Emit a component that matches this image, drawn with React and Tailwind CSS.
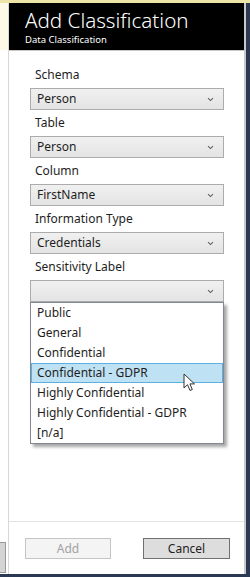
import React from "react";

const font = { fontFamily: '"Noto Sans", "Open Sans", sans-serif' };

function Chevron() {
  return (
    <svg width="7" height="5" viewBox="0 0 7 5" className="shrink-0">
      <path d="M1 1.2 L3.5 3.6 L6 1.2" fill="none" stroke="#606060" strokeWidth="1.1" />
    </svg>
  );
}

function Label({ children }) {
  return (
    <div className="h-[26px] flex items-center pl-[5px] text-[12px] text-[#1e1e1e]">{children}</div>
  );
}

function Combo({ value }) {
  return (
    <div className="h-[22px] w-[194px] border border-[#acacac] bg-gradient-to-b from-[#f0f0f0] to-[#e4e4e4] flex items-center justify-between pl-[6px] pr-[9px] text-[12px] text-[#1e1e1e]">
      <span>{value}</span>
      <Chevron />
    </div>
  );
}

const items = [
  "Public",
  "General",
  "Confidential",
  "Confidential - GDPR",
  "Highly Confidential",
  "Highly Confidential - GDPR",
  "[n/a]",
];

export default function App() {
  return (
    <div className="w-[250px] h-[577px] flex flex-col bg-white overflow-hidden" style={font}>
      <div className="h-[3px] bg-[#ede5a8]" />
      <div className="flex flex-1">
        <div className="w-[8px] flex flex-col">
          <div className="h-[47px] bg-[#fcf9e6]" />
          <div className="flex-1 bg-white" />
          <div className="h-[31px] w-[6px] bg-[#d4d4d4] border border-[#9a9a9a] border-l-0 mb-[1px]" />
        </div>
        <div className="w-[236px] flex flex-col border-l border-[#d8d8d8] relative">
          <div className="h-[47px] bg-black pl-[16px] pt-[5px] text-white">
            <div className="text-[20.6px] leading-[24px] font-light">Add Classification</div>
            <div className="text-[9.5px] leading-[13px] mt-[1px]">Data Classification</div>
          </div>
          <div className="h-[1px] bg-[#c8c8c8]" />
          <div className="flex-1 flex flex-col pt-[11px] pl-[21px]">
            <Label>Schema</Label>
            <Combo value="Person" />
            <Label>Table</Label>
            <Combo value="Person" />
            <Label>Column</Label>
            <Combo value="FirstName" />
            <Label>Information Type</Label>
            <Combo value="Credentials" />
            <Label>Sensitivity Label</Label>
            <Combo value="" />
            <div className="relative">
              <div className="absolute left-0 top-0 w-[194px] border border-[#828790] bg-white shadow-[3px_3px_3px_rgba(0,0,0,0.35)] z-10">
                {items.map((it) => (
                  <div
                    key={it}
                    className={
                      it === "Confidential - GDPR"
                        ? "h-[20px] flex items-center pl-[5px] text-[12px] text-[#1e1e1e] bg-[#bfe1f4] border border-[#5bb0df]"
                        : "h-[20px] flex items-center pl-[6px] text-[12px] text-[#1e1e1e]"
                    }
                  >
                    {it}
                  </div>
                ))}
              </div>
              <svg
                width="14"
                height="20"
                viewBox="0 0 14 20"
                className="absolute left-[153px] top-[71px] z-20"
              >
                <path
                  d="M1 1 L1 15 L4.5 11.7 L7 17.5 L9.3 16.5 L6.9 10.9 L11.5 10.9 Z"
                  fill="white"
                  stroke="#333"
                  strokeWidth="1"
                  strokeLinejoin="round"
                />
              </svg>
            </div>
          </div>
          <div className="h-[1px] bg-[#e2e2e2]" />
          <div className="h-[52px] flex items-start pt-[16px] pl-[16px]">
            <div className="w-[86px] h-[21px] border border-[#c5c5c5] bg-[#f4f4f4] flex items-center justify-center text-[12px] text-[#a2a2a2]">
              Add
            </div>
            <div className="w-[87px] h-[21px] ml-[32px] border border-[#707070] bg-[#dddddd] flex items-center justify-center text-[12px] text-[#1e1e1e]">
              Cancel
            </div>
          </div>
        </div>
        <div className="w-[2px] bg-[#c9c9c9]" />
        <div className="w-[4px] bg-[#2b3955]" />
      </div>
      <div className="h-[3px] bg-[#2b3955]" />
    </div>
  );
}
